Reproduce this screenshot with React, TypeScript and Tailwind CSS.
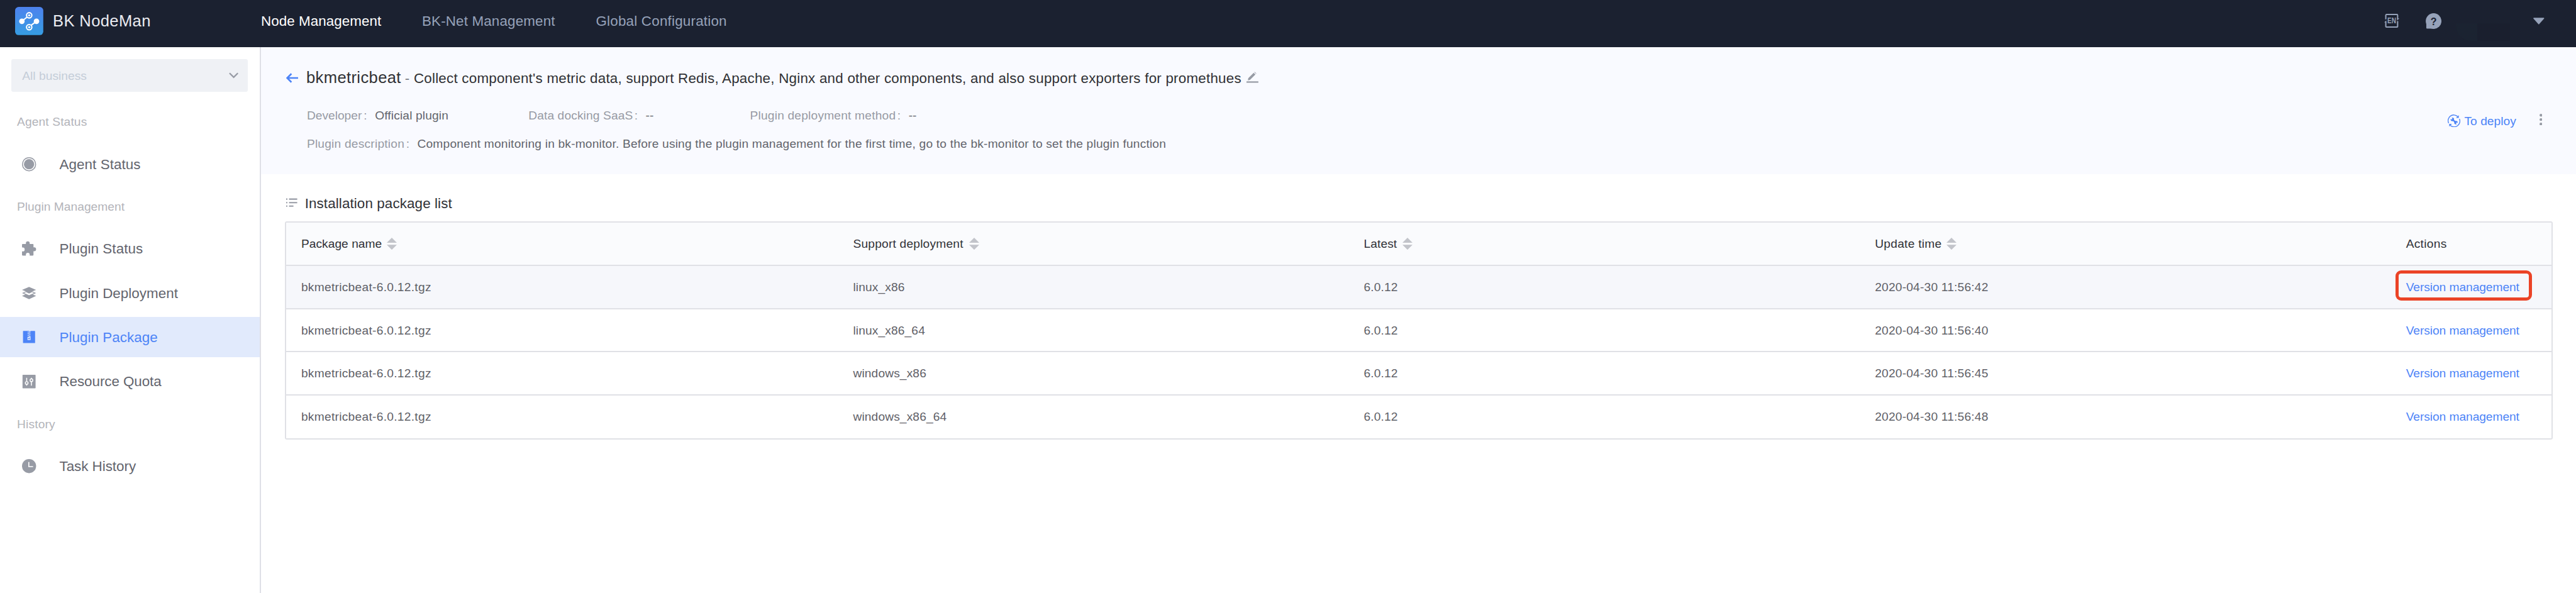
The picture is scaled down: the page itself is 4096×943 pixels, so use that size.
import React from "react";

const blue = "#4d84f7";

function Logo() {
  return (
    <svg className="h-[44.8px] w-[44.8px] shrink-0" viewBox="0 0 56 56">
      <defs>
        <linearGradient id="logo" x1="0" y1="0" x2="0" y2="1">
          <stop offset="0" stopColor="#4d82ee" />
          <stop offset="1" stopColor="#369de2" />
        </linearGradient>
      </defs>
      <rect width="56" height="56" rx="7" fill="url(#logo)" />
      <g stroke="#fff" strokeWidth="2.6" fill="none">
        <path d="M13.5 28.5 24 20M42.5 28.5 32 36.5" />
        <circle cx="28" cy="16.7" r="5.3" />
        <circle cx="28" cy="40.3" r="5.3" />
      </g>
      <g fill="#fff">
        <circle cx="28" cy="16.7" r="2.1" />
        <circle cx="28" cy="40.3" r="2.1" />
        <circle cx="13.5" cy="28.5" r="5.5" />
        <circle cx="42.5" cy="28.5" r="5.5" />
      </g>
    </svg>
  );
}

const icons = {
  agent: (
    <>
      <circle cx="14" cy="14" r="13.1" fill="none" stroke="currentColor" strokeWidth="1.8" />
      <circle cx="14" cy="14" r="10.2" fill="currentColor" />
    </>
  ),
  puzzle: (
    <path
      fill="currentColor"
      d="M1.3 5H7.7V3.4a3.8 3.8 0 0 1 7.6 0V5H21.5a1.3 1.3 0 0 1 1.3 1.3V11.7H24.2a3.8 3.8 0 0 1 0 7.6H22.8V26.7a1.3 1.3 0 0 1-1.3 1.3H15.3V26.3a3.8 3.8 0 0 0-7.6 0V28H1.3A1.3 1.3 0 0 1 0 26.7V19.8H1.3a4 4 0 0 0 0-8H0V6.3A1.3 1.3 0 0 1 1.3 5Z"
    />
  ),
  layers: (
    <>
      <path fill="currentColor" d="M0 19.3 14 13.5 28 19.3 14 25.9Z" />
      <path fill="currentColor" d="M0 13.7 14 7.8 28 13.7 14 20Z" />
      <path fill="#fff" d="M4 13.7 8 12 14 14.6 20 12 24 13.7 14 18.2Z" />
      <path fill="currentColor" d="M0 7.6 14 1.6 28 7.6 14 13.2Z" />
    </>
  ),
  zip: (
    <>
      <rect x="2" y="1.7" width="24" height="24" rx=".8" fill="currentColor" />
      <g fill="#e1eafc">
        <rect x="14" y="1.4" width="3" height="1.7" />
        <rect x="11" y="3.2" width="3.2" height="1.3" />
        <rect x="13.8" y="4.8" width="3.2" height="1.3" />
        <rect x="11" y="6.4" width="3.2" height="1.3" />
        <rect x="13.8" y="8" width="3.2" height="1.3" />
        <rect x="11" y="9.6" width="3.2" height="1.3" />
        <rect x="13.8" y="11.2" width="3.2" height="1.3" />
        <path fillRule="evenodd" d="M11 13H17V19.7H11ZM12.5 15.7V17.8H15.5V15.7Z" />
      </g>
    </>
  ),
  quota: (
    <>
      <rect x="1" y="0" width="26" height="26.9" rx="1" fill="currentColor" />
      <path stroke="#fff" strokeWidth="1.9" d="M9.3 6V13.5M9.3 19V21.5M18.7 6V8M18.7 13.5V21.5" />
      <circle cx="9.3" cy="16.3" r="2.7" fill="none" stroke="#fff" strokeWidth="1.8" />
      <circle cx="18.7" cy="10.8" r="2.7" fill="none" stroke="#fff" strokeWidth="1.8" />
    </>
  ),
  clock: (
    <>
      <circle cx="14" cy="14" r="14" fill="currentColor" />
      <path d="M13.5 6V15H22" fill="none" stroke="#fff" strokeWidth="2" />
    </>
  ),
};

type IconName = keyof typeof icons;

function Heading({ children, tracking }: { children: string; tracking: string }) {
  return (
    <div className={`flex h-[70.45px] items-center pl-[27px] pt-[2px] text-[19.2px] text-[#b3b4ba] ${tracking}`}>
      {children}
    </div>
  );
}

function Item({ icon, label, active, tracking }: { icon: IconName; label: string; active?: boolean; tracking: string }) {
  return (
    <a
      className={`flex h-[64.05px] items-center gap-[36.9px] pl-[35.2px] text-[22.4px] ${
        active ? "bg-[#e1eafc] text-[#4d84f7]" : "text-[#63656e]"
      }`}
    >
      <svg
        className={`h-[22.4px] w-[22.4px] shrink-0 overflow-visible ${active ? "text-[#4d84f7]" : "text-[#979ba5]"}`}
        viewBox="0 0 28 28"
      >
        {icons[icon]}
      </svg>
      <span className={`pt-px ${tracking}`}>{label}</span>
    </a>
  );
}

function Sidebar() {
  return (
    <aside className="flex w-[414.7px] shrink-0 flex-col border-r-2 border-[#dfe0e7] bg-white pt-[19.2px]">
      <div className="mb-[12.8px] ml-[17.6px] flex h-[51.3px] w-[376.3px] items-center justify-between rounded-[3.2px] bg-[#eff1f5] pl-[17.6px] pr-[15px] text-[19.2px] tracking-[0.034px] text-[#c4cdd8]">
        <span className="pt-[2px]">All business</span>
        <svg className="h-[9.6px] w-[15.2px]" viewBox="0 0 19 12">
          <path d="M1.2 1.5 9.5 9.8 17.8 1.5" fill="none" stroke="#979ba5" strokeWidth="2.8" />
        </svg>
      </div>
      <Heading tracking="tracking-[0.124px]">Agent Status</Heading>
      <Item icon="agent" label="Agent Status" tracking="tracking-[0.073px]" />
      <Heading tracking="tracking-[0.024px]">Plugin Management</Heading>
      <nav className="flex flex-col gap-[6.4px]">
        <Item icon="puzzle" label="Plugin Status" tracking="tracking-[0.060px]" />
        <Item icon="layers" label="Plugin Deployment" tracking="tracking-[0.029px]" />
        <Item icon="zip" label="Plugin Package" active tracking="tracking-[0.040px]" />
        <Item icon="quota" label="Resource Quota" tracking="tracking-[-0.062px]" />
      </nav>
      <Heading tracking="tracking-[0.150px]">History</Heading>
      <Item icon="clock" label="Task History" tracking="tracking-[-0.028px]" />
    </aside>
  );
}

function TopBar() {
  return (
    <header className="flex h-[75.25px] shrink-0 items-center bg-[#1b2130] pb-[8px] pl-[24px] pr-[50.4px]">
      <div className="flex w-[391px] items-center gap-[15.3px]">
        <Logo />
        <span className="text-[25.6px] tracking-[0.338px] text-[#eaebf0]">BK NodeMan</span>
      </div>
      <nav className="flex items-center gap-[64.8px] whitespace-nowrap pt-px text-[22.4px] text-[#96a2b9]">
        <a className="tracking-[0.049px] text-white">Node Management</a>
        <a className="tracking-[0.153px]">BK-Net Management</a>
        <a className="tracking-[0.208px]">Global Configuration</a>
      </nav>
      <div className="ml-auto flex items-center">
        <svg className="h-[22.4px] w-[24px]" viewBox="0 0 30 28">
          <g fill="none" stroke="#96a2b9" strokeWidth="2.5">
            <path d="M3.2 11V2.7a1.4 1.4 0 0 1 1.4-1.4H25.3a1.4 1.4 0 0 1 1.4 1.4V10.5" />
            <path d="M26.7 14.5V25a1.4 1.4 0 0 1-1.4 1.4H4.6A1.4 1.4 0 0 1 3.2 25V16" />
          </g>
          <path fill="#96a2b9" d="M25.6 13.5V9H30ZM4.3 13V17H0Z" />
          <text
            x="6.3"
            y="19.3"
            textLength="17.4"
            lengthAdjust="spacingAndGlyphs"
            className="fill-[#96a2b9] font-['Liberation_Sans',sans-serif] text-[15px] font-bold"
          >
            EN
          </text>
        </svg>
        <svg className="ml-[42px] h-[25.2px] w-[25.2px]" viewBox="0 0 31.5 31.5">
          <circle cx="15.75" cy="15.7" r="15.6" fill="#96a2b9" />
          <rect x="1.2" y="15.7" width="15" height="14.8" rx="1" fill="#96a2b9" />
          <text
            x="15.7"
            y="23.2"
            textAnchor="middle"
            className="fill-[#1b2130] font-['Liberation_Sans',sans-serif] text-[20px] font-bold"
          >
            ?
          </text>
        </svg>
        <div className="ml-[23px] mt-[35px] flex h-[28px] w-[113px] self-start">
          <div className="w-[34px] rounded-bl-[24px] bg-[#1b2331]" />
          <div className="w-[52px] bg-[#1a1f2e]" />
        </div>
        <svg className="ml-[10.2px] h-[11px] w-[17.6px]" viewBox="0 0 22 13.5">
          <path d="M1 .3H21a.8.8 0 0 1 .6 1.3L11.600 13a.8.8 0 0 1-1.200 0L.4 1.600A.8.8 0 0 1 1 .3Z" fill="#96a2b9" />
        </svg>
      </div>
    </header>
  );
}

function Meta({
  label,
  labelClass,
  children,
  valueClass,
}: {
  label: string;
  labelClass: string;
  children: string;
  valueClass: string;
}) {
  return (
    <div className="flex h-[45.6px] items-center whitespace-nowrap pt-[2px] text-[19.2px]">
      <span className={`text-[#979aa4] ${labelClass}`}>{label}</span>
      <span className="mr-[12.5px] text-[#979aa4]">:</span>
      <span className={`text-[#63656c] ${valueClass}`}>{children}</span>
    </div>
  );
}

function Summary() {
  return (
    <section className="flex h-[201.75px] shrink-0 justify-between bg-[#f9faff]">
      <div className="pl-[40px] pt-[11.5px]">
        <div className="flex h-[73.55px] items-center whitespace-nowrap">
          <svg className="mr-[13.1px] h-[16px] w-[19.2px]" viewBox="0 0 24 20">
            <path d="M24 10H2.5M10.5 1.5 2 10 10.5 18.5" fill="none" stroke={blue} strokeWidth="3.3" />
          </svg>
          <div className="flex items-baseline text-[22.4px] text-[#303135]">
            <h1 className="text-[25.6px] tracking-[0.363px]">bkmetricbeat</h1>
            <span className="ml-[5.9px] mr-[6.7px] text-[#7b7d85]">-</span>
            <span className="tracking-[0.218px]">
              Collect component's metric data, support Redis, Apache, Nginx and other components, and also support
              exporters for promethues
            </span>
          </div>
          <svg className="ml-[8.2px] h-[18.4px] w-[18.9px]" viewBox="0 0 23.6 23">
            <path d="M0 20.6H23.6" stroke="#979ba5" strokeWidth="2.8" />
            <path
              d="M2.7 17.3 3.6 12.9 14.3 2.2 17.7 5.6 7 16.3ZM15.5 1 16.3.2 19.7 3.6 18.9 4.4Z"
              fill="#979ba5"
            />
          </svg>
        </div>
        <div className="pl-[33.2px]">
          <div className="grid w-[1057px] grid-cols-3">
            <Meta label="Developer" labelClass="mr-[3px]" valueClass="tracking-[0.132px]">
              Official plugin
            </Meta>
            <Meta label="Data docking SaaS" labelClass="mr-[2.4px] tracking-[0.111px]" valueClass="">
              --
            </Meta>
            <Meta label="Plugin deployment method" labelClass="mr-[2.6px] tracking-[0.188px]" valueClass="">
              --
            </Meta>
          </div>
          <Meta label="Plugin description" labelClass="mr-[2.6px] tracking-[0.206px]" valueClass="tracking-[0.180px]">
            Component monitoring in bk-monitor. Before using the plugin management for the first time, go to the bk-monitor to set the plugin function
          </Meta>
        </div>
      </div>
      <div className="flex items-center pr-[54px] pt-[32.5px]">
        <svg className="mr-[6.6px] h-[20.2px] w-[20.2px]" viewBox="0 0 25.2 25.2">
          <g fill="none" stroke={blue} strokeWidth="1.7">
            <path d="M1.9 17.3A11.3 11.3 0 0 1 19.7 4" />
            <path d="M23.2 8.7A11.3 11.3 0 0 1 5.3 21.7" />
          </g>
          <path d="M22 1.5V7H16.5ZM3 24V18.7H8.5Z" fill={blue} />
          <path d="M8.5 9.2 17 16.8" stroke={blue} strokeWidth="3" />
          <circle cx="9.2" cy="9.8" r="3.5" fill={blue} />
          <circle cx="16.4" cy="16.2" r="3.5" fill={blue} />
          <path d="M4.5 8.5 8 10 9.3 8.3 7 5ZM21 17 17.7 16 16.5 17.7 18.8 21Z" fill="#f9faff" />
        </svg>
        <a className="whitespace-nowrap pt-[2px] text-[19.2px] tracking-[0.023px] text-[#4d84f7]">To deploy</a>
        <svg className="mb-[4.5px] ml-[36.8px] h-[18.4px] w-[4.4px]" viewBox="0 0 5.5 23">
          <g fill="#979ba5">
            <circle cx="2.75" cy="2.8" r="2.7" />
            <circle cx="2.75" cy="11.5" r="2.7" />
            <circle cx="2.75" cy="20.2" r="2.7" />
          </g>
        </svg>
      </div>
    </section>
  );
}

const columns = [
  { label: "Package name", tracking: "tracking-[0.036px]", gap: "gap-[7.8px]", sort: true },
  { label: "Support deployment", tracking: "tracking-[0.193px]", gap: "gap-[9.6px]", sort: true },
  { label: "Latest", tracking: "tracking-[0.060px]", gap: "gap-[8.8px]", sort: true },
  { label: "Update time", tracking: "tracking-[0.240px]", gap: "gap-[7.8px]", sort: true },
  { label: "Actions", tracking: "tracking-[0.280px]", gap: "gap-0", sort: false },
];

const rows = [
  ["linux_x86", "2020-04-30 11:56:42"],
  ["linux_x86_64", "2020-04-30 11:56:40"],
  ["windows_x86", "2020-04-30 11:56:45"],
  ["windows_x86_64", "2020-04-30 11:56:48"],
];

const grid = "grid grid-cols-[877.6px_812.1px_812.7px_844.4px_1fr] items-center pl-[23.8px]";

function PackageTable() {
  return (
    <div className="ml-[38.4px] mr-[36.9px] overflow-hidden rounded-[3.2px] border-2 border-[#e0e1e6] text-[19.2px]">
      <div className={`${grid} h-[68.45px] border-b-2 border-[#e0e1e6] bg-[#fafbfd] text-[#313238]`}>
        {columns.map((c) => (
          <div key={c.label} className={`flex items-center ${c.gap}`}>
            <span className={`pt-[2px] ${c.tracking}`}>{c.label}</span>
            {c.sort && (
              <svg className="h-[19.2px] w-[16px]" viewBox="0 0 20 24">
                <path d="M0 10 10 0 20 10ZM0 14H20L10 24Z" fill="#c2c4ca" />
              </svg>
            )}
          </div>
        ))}
      </div>
      {rows.map(([os, time], i) => (
        <div
          key={os}
          className={`${grid} pt-[2px] text-[#5f6168] ${i === 0 ? "bg-[#f6f7fb]" : "bg-white"} ${
            i < 3 ? "h-[68.85px] border-b-2 border-[#e0e1e6]" : "h-[67.25px]"
          }`}
        >
          <span className="tracking-[0.279px]">bkmetricbeat-6.0.12.tgz</span>
          <span className="tracking-[0.116px]">{os}</span>
          <span className="tracking-[0.120px]">6.0.12</span>
          <span className="tracking-[0.187px]">{time}</span>
          <div>
            <a className="relative inline-block tracking-[-0.060px] text-[#4d84f7]">
              Version management
              {i === 0 && (
                <span className="absolute -left-[17.1px] -right-[20px] top-1/2 h-[47.5px] -translate-y-[27px] rounded-[9px] border-5 border-[#eb4326]" />
              )}
            </a>
          </div>
        </div>
      ))}
    </div>
  );
}

export default function App() {
  return (
    <div className="flex h-[943px] w-[4096px] flex-col overflow-hidden bg-white font-['Liberation_Sans',Arial,sans-serif]">
      <TopBar />
      <div className="flex min-h-0 flex-1">
        <Sidebar />
        <main className="min-w-0 flex-1">
          <Summary />
          <div className="flex h-[75.3px] items-center pl-[40.5px] pt-[16.5px]">
            <svg className="mb-px mr-[11.9px] h-[14.4px] w-[17.6px]" viewBox="0 0 22 18">
              <path
                d="M0 2H2.5M5.7 2H22M0 9H2.5M5.7 9H22M0 16H2.5M5.7 16H14.5"
                stroke="#979ba5"
                strokeWidth="2.6"
              />
            </svg>
            <h2 className="pt-px text-[22.4px] tracking-[0.106px] text-[#313238]">Installation package list</h2>
          </div>
          <PackageTable />
        </main>
      </div>
    </div>
  );
}
